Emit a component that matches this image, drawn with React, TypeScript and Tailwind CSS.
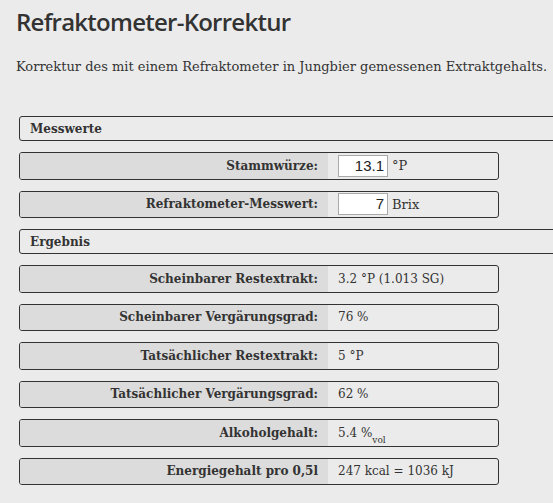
import React from "react";

type Row = { label: string; value: React.ReactNode };

const ergebnis: Row[] = [
  { label: "Scheinbarer Restextrakt:", value: "3.2 °P (1.013 SG)" },
  { label: "Scheinbarer Vergärungsgrad:", value: "76 %" },
  { label: "Tatsächlicher Restextrakt:", value: "5 °P" },
  { label: "Tatsächlicher Vergärungsgrad:", value: "62 %" },
  {
    label: "Alkoholgehalt:",
    value: (
      <>
        5.4 %<sub className="text-[9px] align-[-4px]">vol</sub>
      </>
    ),
  },
  { label: "Energiegehalt pro 0,5l", value: "247 kcal = 1036 kJ" },
];

function SectionHeader({ title }: { title: string }) {
  return (
    <div className="ml-[3px] mr-[-40px] flex h-[25px] items-center rounded-[3px] border border-[#333] pl-[10px] font-bold">
      {title}
    </div>
  );
}

function FieldRow({ label, children }: { label: string; children: React.ReactNode }) {
  return (
    <div className="ml-[3px] flex h-[27.5px] w-[480px] overflow-hidden rounded-[3px] border border-[#333]">
      <div className="flex w-[308px] items-center justify-end bg-[#dcdcdc] pr-[10px] font-bold">
        {label}
      </div>
      <div className="flex flex-1 items-center pl-[10px]">{children}</div>
    </div>
  );
}

function NumberInput({ value }: { value: string }) {
  return (
    <input
      defaultValue={value}
      className="h-[22px] w-[50px] border border-[#a9a9a9] bg-white pr-[3px] text-right font-['Liberation_Sans',Arial,sans-serif] text-[15px] text-[#222] outline-none"
    />
  );
}

export default function App() {
  return (
    <div className="min-h-screen overflow-hidden bg-[#ebebeb] px-4 pt-[6px] font-['DejaVu_Serif',serif] text-[12px] text-[#333]">
      <h1 className="font-['Open_Sans','Noto_Sans',sans-serif] text-[24px] leading-[32px] font-semibold tracking-[-0.75px] text-[#333]">
        Refraktometer-Korrektur
      </h1>
      <p className="mt-[19px] whitespace-nowrap text-[13px] leading-[20px]">
        Korrektur des mit einem Refraktometer in Jungbier gemessenen Extraktgehalts.
      </p>
      <div className="mt-[39px] flex flex-col gap-[11px] pb-4">
        <SectionHeader title="Messwerte" />
        <FieldRow label="Stammwürze:">
          <NumberInput value="13.1" />
          <span className="ml-[4px] text-[13px]">°P</span>
        </FieldRow>
        <FieldRow label="Refraktometer-Messwert:">
          <NumberInput value="7" />
          <span className="ml-[4px] text-[13px]">Brix</span>
        </FieldRow>
        <SectionHeader title="Ergebnis" />
        {ergebnis.map((row) => (
          <FieldRow key={row.label} label={row.label}>
            <span>{row.value}</span>
          </FieldRow>
        ))}
      </div>
    </div>
  );
}
